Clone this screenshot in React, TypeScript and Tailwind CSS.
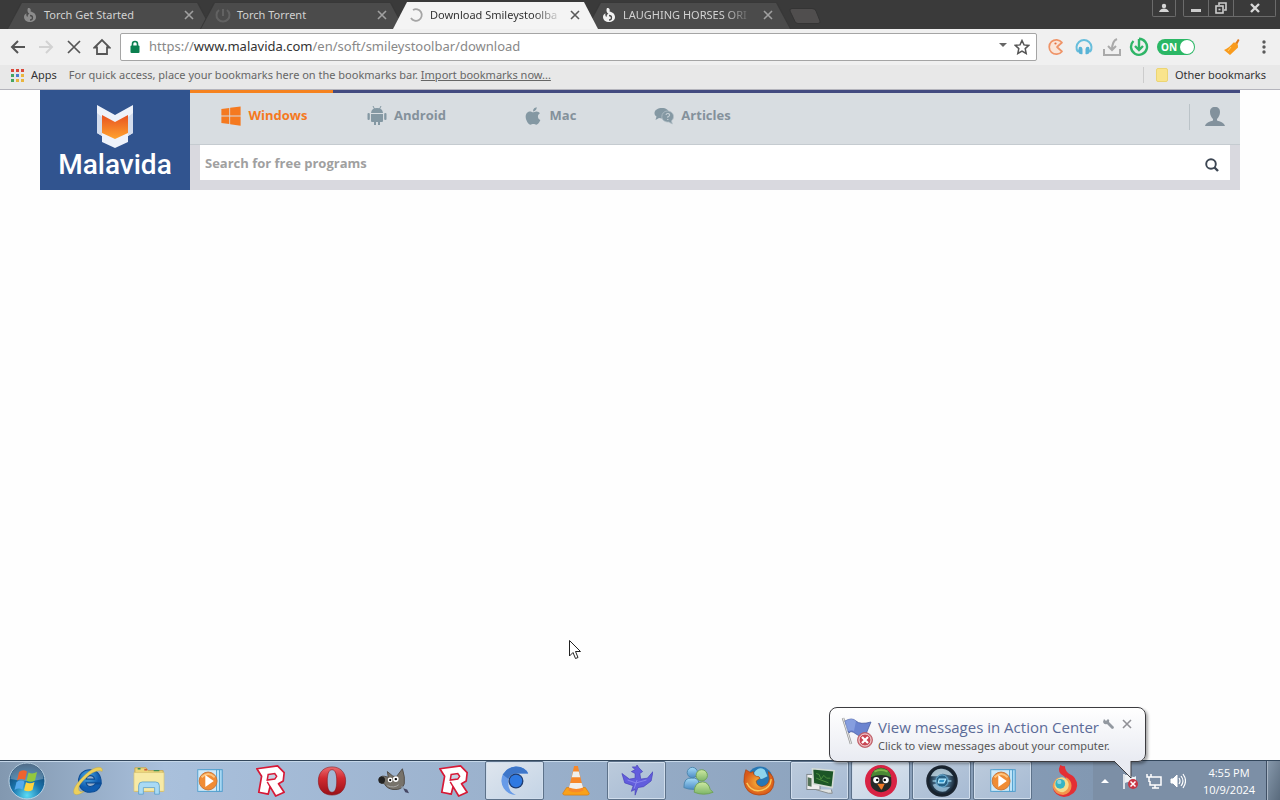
import type { ReactNode } from "react";
import { FaApple, FaWindows } from "react-icons/fa";

const stroke = { fill: "none", strokeLinecap: "butt" as const };

/* ---------- Browser tab icons ---------- */

function FlameIcon({ color }: { color: string }) {
  return (
    <svg className="size-4 shrink-0" viewBox="0 0 16 16">
      <path d="M6 1c3 0 3 2 2.500 3.500C11.500 5 14 7 14 10c0 3.500-2.800 5-6 5s-6-2-6-5c0-1.500 1-3 2.500-3.700C4 8 4.500 9.500 5.500 10c0-2 1-3 2-3.500C5.500 6 5 3 6 1z" fill={color} />
      <path d="M8 8.500c2 0 2.500 1.200 2.500 2.200S9.500 13 8 13" stroke="#4b4b4b" strokeWidth="1.300" {...stroke} />
    </svg>
  );
}

function DimTorrentIcon() {
  return (
    <svg className="size-4 shrink-0" viewBox="0 0 16 16" stroke="#626262" strokeWidth="2" fill="none">
      <path d="M4 3a6.500 6.500 0 1 0 8 0" />
      <path d="M8 2v7" />
    </svg>
  );
}

function SpinnerIcon() {
  return (
    <svg className="size-4 shrink-0" viewBox="0 0 16 16">
      <path d="M5 3a5.800 5.800 0 1 1-2 8" stroke="#a5a5a5" strokeWidth="1.800" {...stroke} />
    </svg>
  );
}

function CloseIcon({ color }: { color: string }) {
  return (
    <svg className="size-2.5" viewBox="0 0 10 10" stroke={color} strokeWidth="1.600">
      <path d="M1 1l8 8M9 1L1 9" />
    </svg>
  );
}

function Tab({ title, icon, active = false, fade = false }: { title: string; icon: ReactNode; active?: boolean; fade?: boolean }) {
  return (
    <div
      className={
        "-mr-3 h-[27px] w-[205px] shrink-0 pt-px [clip-path:polygon(0_100%,14px_0,calc(100%-14px)_0,100%_100%)] " +
        (active ? "relative z-10 bg-[#f4f4f4]" : "bg-[#383838]")
      }
    >
      <div
        className={
          "mx-px flex h-full items-center pr-[17px] pb-0.5 pl-[14px] [clip-path:polygon(0_100%,14px_0,calc(100%-14px)_0,100%_100%)] " +
          (active ? "bg-[#f4f4f4] text-[#333]" : "bg-[#4b4b4b] text-[#d2d2d2]")
        }
      >
        {icon}
        <span
          className={
            "ml-1.5 text-[11px] whitespace-nowrap " +
            (fade ? "[mask-image:linear-gradient(to_right,black_82%,#0003)]" : "")
          }
        >
          {title}
        </span>
        <button aria-label={`Close ${title}`} className="ml-auto">
          <CloseIcon color={active ? "#5a5a5a" : "#a0a0a0"} />
        </button>
      </div>
    </div>
  );
}

function TabStrip() {
  return (
    <div className="flex h-[29px] justify-between bg-[#3a3a3a]">
      <div className="flex items-end overflow-hidden pl-[7px]">
        <Tab title="Torch Get Started" icon={<FlameIcon color="#8c8c8c" />} />
        <Tab title="Torch Torrent" icon={<DimTorrentIcon />} />
        <Tab title="Download Smileystoolba" icon={<SpinnerIcon />} active fade />
        <Tab title="LAUGHING HORSES ORI" icon={<FlameIcon color="#f2f2f2" />} fade />
        <button aria-label="New tab" className="mb-1.5 ml-2.5 h-4 w-8 pt-px">
          <svg className="h-4 w-8" viewBox="0 0 32 16">
            <path d="M3 .5h20q3 0 4 2.500l4 10q.5 2.500-2 2.500H9q-2 0-3-2L1 3Q.5.5 3 .5z" fill="#504e4e" stroke="#343434" />
          </svg>
        </button>
      </div>
      <div className="flex gap-[7px] pr-1">
        <button aria-label="Profile" className="grid h-[17px] w-6 place-items-center rounded-b-xs border border-t-0 border-[#6b6b6b]">
          <svg className="h-2.5 w-3" viewBox="0 0 12 10" fill="#d5d5d5"><circle cx="6" cy="3" r="2.200" /><path d="M1 9c1-3 3-3.500 5-3.500S10 6 11 9z" /></svg>
        </button>
        <div className="flex h-[17px] rounded-b-xs border border-t-0 border-[#6b6b6b]">
          <button aria-label="Minimize" className="grid w-[25px] place-items-center border-r border-[#6b6b6b]">
            <svg className="size-3" viewBox="0 0 12 12"><rect x="1" y="7" width="10" height="3" fill="#ccc" /></svg>
          </button>
          <button aria-label="Restore" className="grid w-[25px] place-items-center border-r border-[#6b6b6b]">
            <svg className="size-3" viewBox="0 0 12 12" stroke="#ccc" strokeWidth="1.600" fill="none"><path d="M4 3V1h7v7H9" /><rect x="1" y="4" width="7" height="7" /><path d="M3.500 7.500h2" /></svg>
          </button>
          <button aria-label="Close window" className="grid w-[41px] place-items-center">
            <svg className="h-2.5 w-3" viewBox="0 0 12 10" stroke="#d8d8d8" strokeWidth="2.400"><path d="M2 1l8 8M10 1L2 9" /></svg>
          </button>
        </div>
      </div>
    </div>
  );
}

/* ---------- Toolbar ---------- */

function IconButton({ label, children }: { label: string; children: ReactNode }) {
  return (
    <button aria-label={label} className="grid size-7 shrink-0 place-items-center">
      {children}
    </button>
  );
}

function Toolbar() {
  return (
    <div className="flex h-[36px] items-center bg-[#f0f0f0] pr-0.5 pl-1">
      <IconButton label="Back">
        <svg className="size-4" viewBox="0 0 16 16" stroke="#555" strokeWidth="2" fill="none"><path d="M15 8H2M8 2L2 8l6 6" /></svg>
      </IconButton>
      <IconButton label="Forward">
        <svg className="size-4" viewBox="0 0 16 16" stroke="#d2d2d2" strokeWidth="2" fill="none"><path d="M1 8h13M8 2l6 6-6 6" /></svg>
      </IconButton>
      <IconButton label="Stop">
        <svg className="size-4" viewBox="0 0 16 16" stroke="#555" strokeWidth="1.700"><path d="M2 2l12 12M14 2L2 14" /></svg>
      </IconButton>
      <IconButton label="Home">
        <svg className="size-[18px]" viewBox="0 0 18 18" stroke="#555" strokeWidth="1.800" fill="none"><path d="M1.500 9.500L9 2l7.500 7.500H14V16H4V9.500z" /></svg>
      </IconButton>
      <label className="ml-1 flex h-7 min-w-0 flex-1 items-center rounded-xs border border-[#a5a5a5] bg-white px-2">
        <svg className="h-3.5 w-3 shrink-0" viewBox="0 0 12 14"><rect x="1.500" y="5.500" width="9" height="7.500" rx="1" fill="#0b8050" /><path d="M3.500 6V4a2.500 2.500 0 0 1 5 0v2" stroke="#0b8050" strokeWidth="1.600" fill="none" /></svg>
        <span className="ml-2 flex-1 truncate text-[13px] text-[#888]">
          https://<span className="text-[#333]">www.malavida.com</span>/en/soft/smileystoolbar/download
        </span>
        <svg className="mb-1 h-1 w-2 shrink-0" viewBox="0 0 8 4"><path d="M0 0h8L4 4z" fill="#666" /></svg>
        <svg className="-mr-0.5 ml-[7px] size-4 shrink-0" viewBox="0 0 16 16"><path d="M8 1.500l2 4.400 4.800.5-3.600 3.200 1 4.800L8 12l-4.200 2.400 1-4.800L1.200 6.400 6 5.900z" stroke="#555" strokeWidth="1.500" fill="none" /></svg>
      </label>
      <div className="flex shrink-0 items-center">
        <button aria-label="Extension" className="ml-2.5">
          <svg className="size-[18px]" viewBox="0 0 18 18"><path d="M15 4.500A7.200 7.200 0 1 0 15 13.500l-5-4.500z" fill="#fae5d8" stroke="#ef9468" strokeWidth="1.700" strokeLinejoin="round" /><circle cx="8.500" cy="5.500" r="1.100" fill="#e66f3f" /></svg>
        </button>
        <button aria-label="Music" className="ml-2.5">
          <svg className="size-[18px]" viewBox="0 0 18 18"><path d="M3 14A7.500 7.500 0 1 1 15 14" stroke="#68bedc" strokeWidth="2" fill="none" /><path d="M4 9q3-1 3.500 2v5Q4 17 3 13zM14 9q-3-1-3.500 2v5q3.500 1 4.500-3z" fill="#58b3d6" /></svg>
        </button>
        <button aria-label="Downloads" className="ml-2.5">
          <svg className="size-[18px]" viewBox="0 0 18 18" stroke="#aaa" strokeWidth="2" fill="none"><path d="M1 11v6h16v-6M14 1Q9 3 9 12M5 8l4 4 4-4" /></svg>
        </button>
        <button aria-label="Torrents" className="ml-2">
          <svg className="size-5" viewBox="0 0 20 20" stroke="#2fb567" strokeWidth="2.400" fill="none"><path d="M4.500 4a8 8 0 1 0 5.500-2.200 8 8 0 0 1 3 .6" /><path d="M10 2v10M6 9l4 4 4-4" /></svg>
        </button>
        <button className="ml-2 flex h-4 w-[38px] items-center justify-between rounded-full bg-[#2bb765] pr-px pl-1 text-[10px] font-bold text-white">
          ON<span className="size-3.5 rounded-full bg-white" />
        </button>
        <button aria-label="Clean" className="ml-[29px]">
          <svg className="size-4" viewBox="0 0 16 16"><path d="M14 0l1.500 1-2.500 5-2-1.500z" fill="#e07a1c" /><path d="M9.500 3.500q5 0 4.500 5L6 16 0 11q5-2 9.500-7.500z" fill="#f99b1d" /><path d="M7 8l-3 4" stroke="#ffcf68" /></svg>
        </button>
        <button aria-label="Menu" className="ml-2.5 grid w-7 place-items-center">
          <svg className="h-4 w-1" viewBox="0 0 4 16" fill="#5a5a5a"><circle cx="2" cy="3" r="1.700" /><circle cx="2" cy="8" r="1.700" /><circle cx="2" cy="13" r="1.700" /></svg>
        </button>
      </div>
    </div>
  );
}

const APP_DOTS = ["#d9483b", "#d9483b", "#d9483b", "#45a560", "#4b7fd0", "#e9b53c", "#45a560", "#e9b53c", "#e9b53c"];

function BookmarksBar() {
  return (
    <div className="flex h-[25px] items-center border-b border-[#b4b4bc] bg-[#e8e8e8] pt-1 pr-3.5 pb-2 pl-[11px] text-[11px] text-[#333]">
      <a href="#apps" className="flex items-center gap-[7px]">
        <span className="grid grid-cols-3 gap-0.5">
          {APP_DOTS.map((c, i) => (
            <span key={i} className="size-[3px]" style={{ background: c }} />
          ))}
        </span>
        Apps
      </a>
      <span className="ml-3 text-[#666]">
        For quick access, place your bookmarks here on the bookmarks bar.{" "}
        <a href="#import" className="underline">Import bookmarks now...</a>
      </span>
      <button className="ml-auto flex items-center border-l border-[#ccc] pl-3">
        <span className="mr-[7px] h-3.5 w-3 rounded-xs border border-[#ecd573] bg-[#f9e48c]" />
        Other bookmarks
      </button>
    </div>
  );
}

/* ---------- Site header ---------- */

function AndroidIcon() {
  return (
    <svg className="size-5" viewBox="0 0 20 20" fill="#8498a3">
      <path d="M4 7q.5-5 6-5t6 5zM4 8h12v7q0 1-1 1h-2v3h-2v-3H9v3H7v-3H5q-1 0-1-1z" />
      <rect x="0.500" y="7" width="2.300" height="7" rx="1.100" /><rect x="17.200" y="7" width="2.300" height="7" rx="1.100" />
      <path d="M6 0l1.500 3M14 0l-1.500 3" stroke="#8498a3" />
    </svg>
  );
}

function CommentsIcon() {
  return (
    <svg className="size-5" viewBox="0 0 20 20">
      <path d="M8 2c4 0 7 2 7 5s-3 5.500-7 5.500L5 12l-3.500 2 1-3.500C1 9.500.5 8.500.5 7c0-3 3.500-5 7.500-5z" fill="#8498a3" />
      <path d="M13.500 5c3.500 0 6 2.400 6 5.500 0 2-.8 3.500-2 4.300l.8 3.200-3.500-2c-4 .3-7-2-7-5.200S10 5 13.500 5z" fill="#8498a3" stroke="#b3bfc7" strokeWidth=".8" />
      <path d="M12 9q.3-1.700 2-1.500 1.800.3 1.500 1.800-.3 1-1.700 1.500v1M13.800 13v1" stroke="#c6d0d6" strokeWidth="1.200" fill="none" />
    </svg>
  );
}

const NAV: { label: string; icon: ReactNode; active?: boolean }[] = [
  { label: "Windows", icon: <FaWindows className="size-[22px]" />, active: true },
  { label: "Android", icon: <AndroidIcon /> },
  { label: "Mac", icon: <FaApple className="size-5 text-[#8498a3]" /> },
  { label: "Articles", icon: <CommentsIcon /> },
];

function SiteHeader() {
  return (
    <header className="mx-10 flex h-[100px] font-['Open_Sans',sans-serif]">
      <a href="#home" className="flex w-[150px] shrink-0 flex-col items-center bg-[#31548f] pt-[15px] text-white">
        <svg className="h-[43px] w-9" viewBox="0 0 36 43">
          <defs>
            <linearGradient id="shield" x2="0" y2="1"><stop stopColor="#e85221" /><stop offset="1" stopColor="#ffa32e" /></linearGradient>
          </defs>
          <path d="M0 0l18 10L36 0v28l-5 3v6l-13 6L5 37v-6l-5-3z" fill="#eef2fa" />
          <path d="M0 28l5 3V12l-5-4zM36 28l-5 3V12l5-4z" fill="#d3dced" />
          <path d="M5 10l13 7 13-7v18l-13 6-13-6z" fill="url(#shield)" />
        </svg>
        <span className="font-['Roboto',sans-serif] text-[28px] leading-[33px] font-medium">Malavida</span>
      </a>
      <div className="min-w-0 flex-1 bg-[#d9d9df]">
        <div className="flex h-[55px] items-start border-b border-[#c5cbd0] bg-[#d8dde1]">
          <nav className="flex">
            {NAV.map((n) => (
              <a
                key={n.label}
                href={"#" + n.label}
                className={
                  "flex h-[51px] w-[143px] items-center justify-center gap-[7px] border-t-3 pb-0.5 pl-1 text-[13px] font-bold " +
                  (n.active ? "border-[#f5821f] text-[#f5791f]" : "border-[#434b80] text-[#84919b]")
                }
              >
                {n.icon}
                {n.label}
              </a>
            ))}
          </nav>
          <div className="flex h-[51px] flex-1 items-center justify-end border-t-3 border-[#434b80] pr-3.5">
            <button aria-label="Account" className="border-l border-[#bbc3c8] py-0.5 pl-3.5">
              <svg className="h-[22px] w-[22px]" viewBox="0 0 22 22"><path d="M11 1c3.500 0 5 2 5 5s-1.500 5.500-3 7v1.500c3 1 7 2 8 5.500H1c1-3.500 5-4.500 8-5.500V13c-1.500-1.500-3-4-3-7s1.500-5 5-5z" fill="#82919c" /></svg>
            </button>
          </div>
        </div>
        <div className="mr-2.5 ml-2.5 flex h-[35px] items-center bg-white pr-2.5 pl-[5px]">
          <input aria-label="Search for free programs" placeholder="Search for free programs" className="min-w-0 flex-1 pt-0.5 text-[13px] font-bold outline-none placeholder:text-[#a0a0a0]" />
          <button aria-label="Search">
            <svg className="mt-1 size-4" viewBox="0 0 16 16" stroke="#3c4653" strokeWidth="1.900" fill="none"><circle cx="7" cy="7" r="4.800" /><path d="M10.500 10.500L14 14" strokeWidth="2.400" /></svg>
          </button>
        </div>
      </div>
    </header>
  );
}

/* ---------- Taskbar icons ---------- */

function Pic({ children }: { children: ReactNode }) {
  return <svg className="size-8" viewBox="0 0 34 34">{children}</svg>;
}

function StartOrb() {
  return (
    <svg className="size-[38px]" viewBox="0 0 38 38">
      <defs>
        <radialGradient id="orb" cx=".5" cy=".9" r=".9"><stop stopColor="#5bdcf5" /><stop offset=".45" stopColor="#1a75ae" /><stop offset="1" stopColor="#0e3259" /></radialGradient>
      </defs>
      <circle cx="19" cy="19" r="18" fill="url(#orb)" stroke="#bcd3e4" />
      <path d="M2.500 17a16.500 15.500 0 0 1 33 0q-16 4-33 0z" fill="#fff" opacity=".28" />
      <path d="M11 10q4-3 8-.5l-2 8.500q-4-2-8 .5z" fill="#ee632d" />
      <path d="M20.500 10.500q4 2 8.500-.5l-2 8.500q-4 2.500-8.500.3z" fill="#93c83e" />
      <path d="M8.500 20q4-2.500 8-.5l-2 8q-4-2-8 .5z" fill="#55a9ed" />
      <path d="M18 20.300q4 2 8.500-.3l-2 8q-4 2.500-8.500.3z" fill="#ffd33d" />
    </svg>
  );
}

const ie = (
  <Pic>
    <defs><radialGradient id="ieg" cx=".4" cy=".3"><stop stopColor="#4fa9e2" /><stop offset="1" stopColor="#0f5cb0" /></radialGradient></defs>
    <path d="M19 5c7 0 12 5 12 14H15c1 5 7 5 10 1h6c-2 6-6 9-12 9-7 0-12-5-12-12S12 5 19 5zm-4 10h9c-1-5-8-5-9 0z" fill="url(#ieg)" stroke="#0d4d95" strokeWidth="1.200" />
    <path d="M32 7c2-5-5-7-14 0C8 15 0 25 2 30c2 3 7 1 11-2-4 1-6 0-6-3 0-4 6-10 12-15 6-4 11-5 13-3z" fill="#edd05c" stroke="#b9a03b" strokeWidth=".4" />
  </Pic>
);
const explorer = (
  <Pic>
    <path d="M2 3h12l2 3h16v22H2z" fill="#eed77b" stroke="#c4a854" />
    <path d="M1 8h32v20H1z" fill="#f7eaa6" stroke="#d6c171" strokeWidth=".7" />
    <path d="M5 4h3M22 6h6" stroke="#3f8f55" strokeWidth="1.500" /><path d="M12 5h3" stroke="#cf593e" strokeWidth="1.800" />
    <path d="M6 31v-9q0-4 4-4h14q4 0 4 4v9h-5v-7H11v7z" fill="#a9daf5" stroke="#549bc8" strokeWidth=".8" />
  </Pic>
);
const player = (
  <Pic>
    <rect x="11" y="5" width="19" height="23" fill="#a8d8f3" stroke="#4b9bcb" /><rect x="7" y="5" width="20" height="23" fill="#c6e9fb" stroke="#4b9bcb" /><rect x="4" y="5" width="20" height="23" fill="#cfe9f8" stroke="#529fce" />
    <circle cx="15" cy="17" r="9.500" fill="#f08c35" stroke="#c9763a" /><path d="M8 13q7-7 14 0" stroke="#ffc57d" strokeWidth="2" fill="none" /><path d="M12 10.500l9 6.500-9 6.500z" fill="#fff" />
  </Pic>
);
const roblox = (
  <Pic>
    <path d="M2 4l22-3 7 7-1 9-5 3 6 9-9 4-6-10-2 8-10-2 3-17z" fill="#fff" stroke="#d71936" strokeWidth="1.800" strokeLinejoin="round" />
    <path d="M14 10l7-1 2 3-2 3-8 1z" fill="#c6d4e4" stroke="#d71936" strokeWidth="1.600" /><path d="M13 18l3 5" stroke="#d71936" strokeWidth="1.500" />
  </Pic>
);
const opera = (
  <Pic>
    <defs><linearGradient id="op" x2="0" y2="1"><stop stopColor="#ea6c70" /><stop offset=".4" stopColor="#d12a30" /><stop offset="1" stopColor="#991018" /></linearGradient></defs>
    <path fillRule="evenodd" d="M17 2c9 0 14.500 6 14.500 15S26 32 17 32 2.500 26 2.500 17 8 2 17 2zm0 3c-4 0-5 6-5 12s1 12 5 12 5-6 5-12-1-12-5-12z" fill="url(#op)" stroke="#8a1118" strokeWidth=".6" />
  </Pic>
);
const gimp = (
  <Pic>
    <path d="M8 12l4 1-1-6 6 5h4l6-8q3 9 2 16-2 7-12 6-7-1-9-6-5 0-6-4 1-5 6-4z" fill="#77736b" stroke="#504c48" />
    <ellipse cx="5" cy="16" rx="3.500" ry="3.800" fill="#222" /><circle cx="14" cy="16" r="2.600" fill="#fff" /><circle cx="20" cy="15" r="3" fill="#fff" /><circle cx="14" cy="16" r="1.200" /><circle cx="20" cy="15" r="1.300" />
    <path d="M11 22q7 3 12-1" stroke="#aaa" fill="none" /><path d="M26 23l4 3" stroke="#8f9fb2" strokeWidth="1.500" /><path d="M28 25l4 1 2 4-4-1z" fill="#444764" />
  </Pic>
);
const chromium = (
  <Pic>
    <path d="M31 9H18q-9 1-8 9-1 10 8 14A15.500 15.500 0 0 1 4 10Q9 2 18 1.500 28 2 31 9z" fill="#679be8" />
    <path d="M4 10Q9 2 18 1.500 28 2 31 9H18q-6 0-8 6z" fill="#3d76c9" />
    <circle cx="18" cy="17" r="8" fill="#1f3d72" /><circle cx="18" cy="17" r="6.600" fill="#2e79e2" />
  </Pic>
);
const vlc = (
  <Pic>
    <path d="M7 24h20l4 6q0 2-2 2H5q-2 0-2-2z" fill="#f9a11b" stroke="#d97909" strokeWidth=".7" />
    <path d="M15 1h4l6 26q-8 4-16 0z" fill="#f7882a" /><path d="M14 7h6l1.500 6h-9zM11 19h12l1.500 5q-7 3-15 0z" fill="#f0f0ee" />
  </Pic>
);
const bird = (
  <Pic>
    <path d="M12 2h4l1-2 2 3 4 4-3 2 1 6 7-1 6-7-2 10-8 6-6 1-3 8v-6l-4 2 2-6-9-3-3-10 8 6 6-1v-5l-4-2 4-2z" fill="#625ddd" stroke="#443fb9" strokeWidth=".7" /><path d="M7 16l9 3 11-3M14 25l3-9" stroke="#8b88ef" fill="none" />
  </Pic>
);
const messenger = (
  <Pic>
    <defs><linearGradient id="mg" x2="0" y2="1"><stop stopColor="#cfeaa2" /><stop offset="1" stopColor="#7db568" /></linearGradient><linearGradient id="mb" x2="0" y2="1"><stop stopColor="#a6dbf7" /><stop offset="1" stopColor="#4c8bc4" /></linearGradient></defs>
    <circle cx="11" cy="8" r="5.500" fill="url(#mb)" stroke="#4c85ad" /><path d="M2 24q0-11 8-10 8-1 8 6l-4 6q-8 0-12-2z" fill="url(#mb)" stroke="#4c85ad" /><circle cx="21" cy="11" r="6" fill="url(#mg)" stroke="#6fa256" /><path d="M13 29q0-11 9-11 6 0 8 8l3 3q-10 4-20 0z" fill="url(#mg)" stroke="#6fa256" />
  </Pic>
);
const firefox = (
  <Pic>
    <defs><radialGradient id="ff"><stop stopColor="#f9b53a" /><stop offset="1" stopColor="#d95818" /></radialGradient></defs>
    <circle cx="18" cy="15" r="13.500" fill="#2877b4" /><path d="M12 8q5-7 11-3l3 7-6 3-8-2z" fill="#8ed4ed" />
    <path d="M3 5l5 3 3-1q-1 3 3 5 4 0 4 2l-4 3q0 5 6 6 7-1 8-8l-1-8q6 5 6 11-1 14-16 14Q3 31 1 18 1 10 3 5z" fill="url(#ff)" stroke="#a8430e" strokeWidth=".7" /><path d="M4 19q5 10 15 8 10-2 11-12" stroke="#fbc95a" strokeWidth="1.500" fill="none" />
  </Pic>
);
const monitor = (
  <Pic>
    <rect x="3" y="10" width="14" height="16" fill="#ededed" stroke="#7c858b" /><path d="M12 26l14 4h4l-1-4" fill="#e0e3e2" stroke="#858b8c" />
    <path d="M9 4l23 2-2 18-20-4z" fill="#1c5627" stroke="#d3dbd6" strokeWidth="1.700" /><path d="M13 9l3 1 2 5 3-4 3 3 4 0M13 14l13 5" stroke="#4d9140" fill="none" /><path d="M4 13l4 1v9l-4-1z" fill="#547358" />
  </Pic>
);
const penguin = (
  <Pic>
    <circle cx="17" cy="17" r="17" fill="#d82344" /><path d="M6 17q0-13 11-14 11 1 11 14 1 10-11 12Q5 27 6 17z" fill="#252a29" /><path d="M6 13q2-9 11-10 9 1 11 10-11-5-22 0z" fill="#4b8935" /><path d="M10 7q7-3 14 0" stroke="#82b54c" strokeWidth="2" fill="none" />
    <circle cx="12" cy="16" r="3.300" fill="#fff" /><circle cx="22" cy="16" r="3.300" fill="#fff" /><circle cx="13" cy="16" r="1.300" /><circle cx="21" cy="16" r="1.300" /><path d="M13 20h8l-3 6h-1z" fill="#f17b29" />
  </Pic>
);
const globe = (
  <Pic>
    <defs><radialGradient id="gl"><stop stopColor="#71d4ff" /><stop offset=".5" stopColor="#426782" /><stop offset="1" stopColor="#0a111b" /></radialGradient></defs>
    <circle cx="17" cy="17" r="15.500" fill="url(#gl)" stroke="#1b2530" strokeWidth="2.500" /><path d="M5 12Q9 3 17 4t12 8l-8-2q-5-2-9 2z" fill="#c5dce9" opacity=".8" /><path d="M7 21q4 9 14 7l5-5-8 1-8-4z" fill="#a4cce5" opacity=".75" /><circle cx="17" cy="17" r="6.500" fill="#286184" stroke="#6fb4dc" /><path d="M14 15h7l-2 4h-6zM7 17h4M23 17h4" stroke="#b2eaff" strokeWidth="1.300" fill="#3197cd" />
  </Pic>
);
const torch = (
  <Pic>
    <path d="M13 0q4 2 5 1 0 5 4 8 9 4 9 13-1 10-14 12Q6 32 5 23q2 5 8 6 9 0 9-9-1-5-5-8-8-4-4-12z" fill="#e42f34" />
    <path d="M11 13q-6 4-6 10 2 8 11 9 9-2 9-10 0-6-6-9 1 9-2 11-4 2-7-2z" fill="#f3964d" />
    <path d="M11 14q-5 3-4 9 3 6 9 6 6-2 6-8 0-4-4-7-3-2-7 0z" fill="#f5dc8c" /><circle cx="13" cy="20" r="5.200" fill="#36b4c4" /><circle cx="12" cy="18" r="2.300" fill="#8dd7de" />
  </Pic>
);

const APPS: { name: string; icon: ReactNode; open?: boolean; bright?: boolean }[] = [
  { name: "Internet Explorer", icon: ie },
  { name: "Windows Explorer", icon: explorer },
  { name: "Media Player", icon: player },
  { name: "Roblox", icon: roblox },
  { name: "Opera", icon: opera },
  { name: "GIMP", icon: gimp },
  { name: "Roblox Studio", icon: roblox },
  { name: "Chromium", icon: chromium, open: true, bright: true },
  { name: "VLC", icon: vlc },
  { name: "Bird", icon: bird, open: true },
  { name: "Messenger", icon: messenger },
  { name: "Firefox", icon: firefox },
  { name: "Task Manager", icon: monitor, open: true },
  { name: "Penguin", icon: penguin, open: true, bright: true },
  { name: "Globe", icon: globe, open: true },
  { name: "Media Library", icon: player, open: true },
  { name: "Torch", icon: torch },
];

function Taskbar() {
  return (
    <footer className="flex h-10 items-stretch border-t border-[#33475c] bg-[#8298b0]">
      <div className="flex flex-1 gap-0.5 bg-linear-to-r from-[#8298b0] via-[#a9c0dc] via-15% to-[#8298b2] pl-2 shadow-[inset_0_1px_0_#c5d7e9]">
        <button aria-label="Start" className="flex w-12 shrink-0 items-center">
          <StartOrb />
        </button>
        {APPS.map((a) => (
          <button
            key={a.name}
            aria-label={a.name}
            className={
              "grid w-[59px] shrink-0 place-items-center rounded-xs border " +
              (a.open
                ? "border-[#5d728a] shadow-[inset_0_0_0_1px_#d0ddec] " + (a.bright ? "bg-linear-to-br from-[#dfe6ee] to-[#c3d3e5]" : "bg-linear-to-br from-[#bccbdc] to-[#a6bad3]")
                : "border-transparent")
            }
          >
            {a.icon}
          </button>
        ))}
      </div>
      <div className="flex shrink-0 items-center bg-[#7c8fa6] text-white">
        <button aria-label="Show hidden icons" className="ml-2">
          <svg className="h-1 w-2" viewBox="0 0 8 4"><path d="M0 4l4-4 4 4z" fill="#fff" /></svg>
        </button>
        <button aria-label="Action Center" className="ml-3">
          <svg className="size-[18px]" viewBox="0 0 18 18"><path d="M3 2v15" stroke="#fff" strokeWidth="1.500" /><path d="M4 3q3-1 6 1t5 0v8q-3 1-5-1t-6 0z" fill="#edf1f4" /><circle cx="12" cy="12" r="5" fill="#c93543" /><path d="M9.500 9.500l5 5M14.500 9.500l-5 5" stroke="#fff" strokeWidth="1.500" /></svg>
        </button>
        <button aria-label="Network" className="ml-[7px]">
          <svg className="size-4" viewBox="0 0 16 16" stroke="#fff" strokeWidth="1.500" fill="none"><path d="M5 4h10v8H4V8M9 12v3M6 15h7M1 1v3h4V1M3 4v5" /></svg>
        </button>
        <button aria-label="Volume" className="ml-2">
          <svg className="size-4" viewBox="0 0 16 16" stroke="#fff" fill="none"><path d="M1 6h2l4-4v12l-4-4H1z" fill="#fff" /><path d="M9 5q2 3 0 6M11 3q4 5 0 10M13 1q5 7 0 14" strokeWidth="1.200" /></svg>
        </button>
        <div className="ml-3.5 w-[58px] text-center font-['Open_Sans',sans-serif] text-[11px] leading-[17px] whitespace-nowrap">
          <div>4:55 PM</div>
          <div>10/9/2024</div>
        </div>
        <button aria-label="Show desktop" className="ml-2 h-full w-[15px] border-l border-[#405065] bg-linear-to-br from-[#8799ac] to-[#58697b] shadow-[inset_1px_0_0_#a9b6c5]" />
      </div>
    </footer>
  );
}

function Balloon() {
  return (
    <div role="status" className="absolute right-[134px] bottom-[38px] z-20 flex h-[55px] w-[317px] rounded-lg border border-[#3c3c40] bg-linear-to-b from-white to-[#e9ebf2] pt-2 pl-[11px] shadow-[2px_2px_3px_#0005]">
      <svg className="size-8 shrink-0" viewBox="0 0 32 32">
        <path d="M2 2l8 26" stroke="#999" strokeWidth="2.500" /><path d="M2 2l8 26" stroke="#e6e6e6" />
        <path d="M4 5q7-4 11 0t15 1l-5 12q-5 4-10 0t-7-1z" fill="#6b84d0" stroke="#40569c" strokeWidth=".7" /><path d="M4 5q7-4 11 0l-2 10q-3-2-7 1z" fill="#98afe9" opacity=".6" />
        <circle cx="24" cy="24" r="7.500" fill="#d6717a" stroke="#b5555f" strokeWidth=".8" /><circle cx="24" cy="24" r="6" fill="#c94452" stroke="#f0d9dc" /><path d="M21 21l6 6M27 21l-6 6" stroke="#fff" strokeWidth="2.200" />
      </svg>
      <div className="ml-[5px] whitespace-nowrap">
        <div className="font-['Open_Sans',sans-serif] text-[15px] leading-[22px] text-[#5b6b98]">View messages in Action Center</div>
        <div className="text-[11px] leading-[15px] text-[#555]">Click to view messages about your computer.</div>
      </div>
      <div className="absolute top-2.5 right-[13px] flex gap-[7px]">
        <button aria-label="Options">
          <svg className="size-3" viewBox="0 0 12 12"><path d="M1 1l2 2 2-2q2 1 1 3l5 5q0 2-2 2L4 6Q1 7 0 4z" fill="#9298a0" /></svg>
        </button>
        <button aria-label="Dismiss"><CloseIcon color="#909096" /></button>
      </div>
      <svg className="absolute top-[52px] left-[283px] h-5 w-5" viewBox="0 0 20 20"><path d="M1 0v1l17 17V0z" fill="#e9ebf2" /><path d="M1 1l17 17V1" stroke="#3c3c40" fill="none" /></svg>
    </div>
  );
}

export default function App() {
  return (
    <div className="relative flex min-h-screen flex-col overflow-hidden bg-[#fefefe] font-['Noto_Sans',sans-serif]">
      <TabStrip />
      <Toolbar />
      <BookmarksBar />
      <main className="flex-1">
        <SiteHeader />
      </main>
      <Taskbar />
      <Balloon />
      <svg className="absolute top-[640px] left-[569px] h-5 w-3" viewBox="0 0 12 20">
        <path d="M.5.5v15.500l3.500-3.500 2.500 6 2.500-1-2.500-6h5z" fill="#fff" stroke="#222" />
      </svg>
    </div>
  );
}
